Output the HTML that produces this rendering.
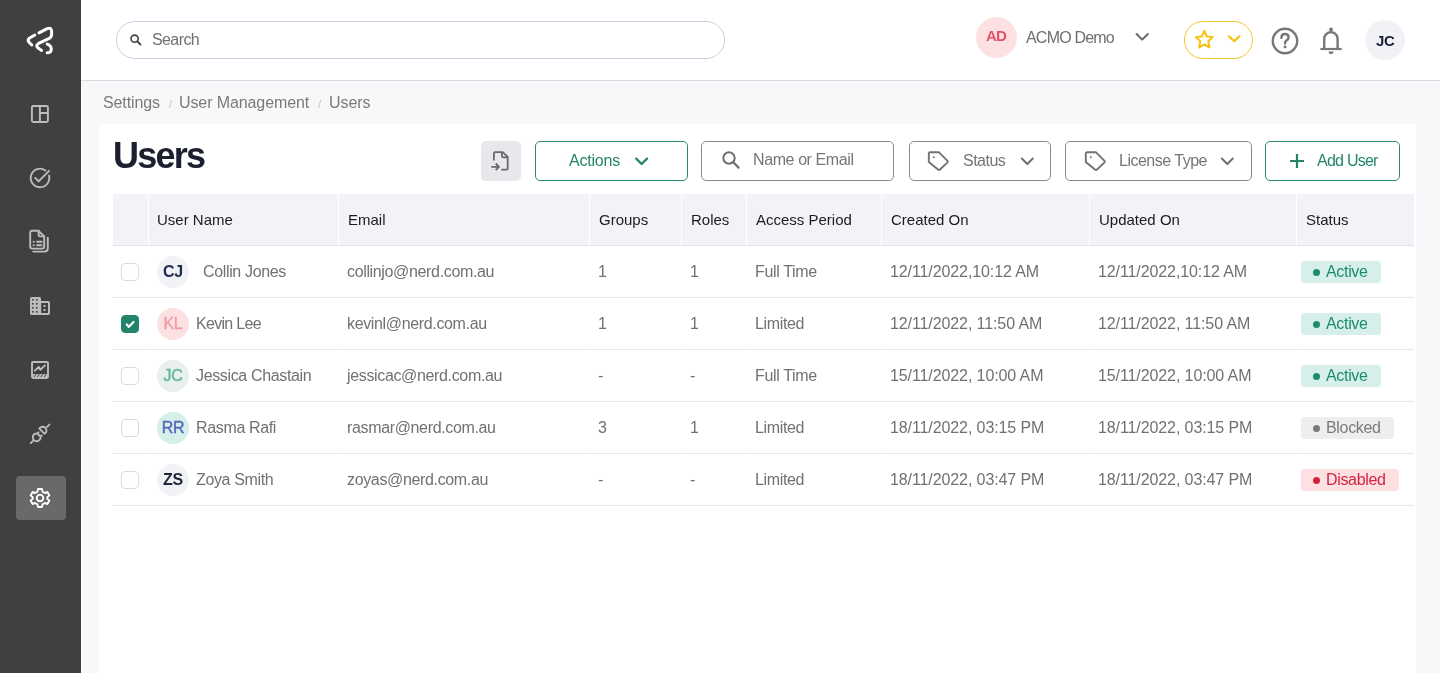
<!DOCTYPE html>
<html><head><meta charset="utf-8">
<style>
*{box-sizing:border-box;margin:0;padding:0}
html,body{width:1440px;height:673px;overflow:hidden}
.abs,table{will-change:transform}
body{background:#f7f8fa;font-family:"Liberation Sans",sans-serif;position:relative;color:#666}
.abs{position:absolute}
#side{left:0;top:0;width:81px;height:673px;background:#404040}
#hdr{left:81px;top:0;width:1359px;height:81px;background:#fff;border-bottom:1px solid #d9dadd}
#search{left:116px;top:21px;width:609px;height:38px;border:1px solid #c8cfe0;border-radius:19px;background:#fff}
.txt{white-space:nowrap;line-height:1}
#card{left:99px;top:124px;width:1317px;height:560px;background:#fff;border-radius:3px}
.btn{position:absolute;top:141px;height:40px;border-radius:5px;background:#fff}
.gbtn{border:1.3px solid #2a8a70;color:#24856b}
.gybtn{border:1px solid #8a8a8a;color:#757575}
table{position:absolute;left:113px;top:194px;border-collapse:separate;border-spacing:1px 0;margin-left:-1px}
th{background:#f2f3f7;height:52px;text-align:left;font-weight:normal;color:#1c1c1c;font-size:15px;padding:0 0 0 9px;border-bottom:1px solid #e3e4e8}
td{height:52px;font-size:16px;letter-spacing:-0.35px;color:#717171;padding:0 0 0 8px;border-bottom:1px solid #e6e7ea;white-space:nowrap}
td.dt{letter-spacing:-0.1px}
.cb{width:18px;height:18px;border:1px solid #dadbe0;border-radius:4px;display:inline-block;vertical-align:middle;margin-left:0}
.av{display:inline-block;width:32px;height:32px;border-radius:16px;text-align:center;line-height:32px;font-size:16px;letter-spacing:-0.3px;vertical-align:middle;margin-right:7px}
.nm{position:relative;top:1px}
.badge{display:inline-block;height:22px;line-height:22px;border-radius:4px;padding:0 13px 0 12px;font-size:16px;letter-spacing:-0.33px;position:relative}
td.st{padding-left:4px}
.badge i{display:inline-block;width:7px;height:7px;border-radius:4px;margin-right:6px;vertical-align:1px}
</style></head><body>
<div id="side" class="abs">
<svg class="abs" style="left:0;top:0" width="81" height="673" viewBox="0 0 81 673">
 <g fill="none" stroke="#fff" stroke-width="3" stroke-linecap="round" stroke-linejoin="round">
  <path d="M34.8,35 L29.3,38.2 Q27.2,40 29,42.2 L31.8,45"/>
  <path d="M39,32.8 L47.2,28.6 Q51.6,27 51.6,31.6 L51.6,34.6 Q51.6,37.2 49.2,38.3 L38.6,43.4 Q35.3,45.6 37.8,47.8 L41.6,50.4"/>
  <path d="M47.2,44 L49.6,45.4 Q51.2,46.4 51.2,48.4 L51.2,50 Q50.8,52.8 47.2,52.8"/>
 </g>
 <g fill="none" stroke="#bcbcbc" stroke-width="1.9" stroke-linecap="round" stroke-linejoin="round">
  <!-- layout -->
  <rect x="31.9" y="106" width="16" height="16" rx="1.5"/>
  <path d="M39.9,106 V122 M39.9,113 H47.9"/>
  <!-- check circle -->
  <path d="M45.4,170.4 A9.3,9.3 0 1 0 49,175.6"/>
  <path d="M35.2,177.9 L38.6,181.4 L49,170.9"/>
  <!-- docs -->
  <path d="M38.6,230.8 H32.2 Q30.2,230.8 30.2,232.8 V246.6 Q30.2,248.6 32.2,248.6 H42.2 Q44.2,248.6 44.2,246.6 V236.4 Z"/>
  <path d="M38.6,230.8 V234.4 Q38.6,236.4 40.6,236.4 H44.2"/>
  <path d="M33.2,251.6 H44.4 Q47.8,251.6 47.8,248.2 V237.6"/>
  <path d="M33.6,241.7 h0.2 M37,241.7 H41.6 M33.6,245.2 h0.2 M37,245.2 H41.6"/>
  <!-- chart -->
  <rect x="32" y="362" width="16" height="16" rx="1.2"/>
  <path d="M34.8,370.6 L38.8,367 L40.4,369.8 L45,365.4"/>
  <!-- plug -->
  <path d="M30.7,443.1 L33.5,440.3"/>
  <path d="M37.3,433.5 L40.5,436.7 A3.9,3.9 0 1 1 37.3,433.5 Z M37.3,433.5 L38.5,432.3 M40.5,436.7 L41.7,435.5" stroke-width="1.9"/>
  <path d="M39.4,428.6 L44.6,433.8 A3.8,3.8 0 1 0 39.4,428.6 Z" stroke-width="1.9"/>
  <path d="M47.1,426.9 L49.4,424.6"/>
 </g>
 <!-- building -->
 <g fill="#bcbcbc">
  <rect x="30" y="297" width="11" height="18" rx="1.5"/>
  <path d="M40,301 H48 Q50,301 50,303 V313 Q50,315 48,315 H40 Z M41.2,303 V313 H48 V303 Z" fill-rule="evenodd"/>
  <rect x="43.5" y="305" width="2" height="2"/><rect x="43.5" y="309" width="2" height="2"/>
 </g>
 <g fill="#404040">
  <rect x="32" y="299" width="1.6" height="1.6"/><rect x="36" y="299" width="1.6" height="1.6"/>
  <rect x="32" y="303" width="1.6" height="1.6"/><rect x="36" y="303" width="1.6" height="1.6"/>
  <rect x="32" y="307" width="1.6" height="1.6"/><rect x="36" y="307" width="1.6" height="1.6"/>
  <rect x="32" y="311" width="1.6" height="1.6"/><rect x="36" y="311" width="1.6" height="1.6"/>
 </g>
 <!-- chart hatch -->
 <g fill="#bcbcbc"><rect x="32" y="374" width="16" height="3"/></g>
 <g stroke="#404040" stroke-width="0.9"><path d="M34,377 L36,374 M37.4,377 L39.4,374 M40.8,377 L42.8,374 M44.2,377 L46.2,374"/></g>
 <!-- active settings -->
 <rect x="16" y="476" width="50" height="44" rx="4" fill="#696969"/>
 <g transform="translate(40,498)">
  <path fill="none" stroke="#fff" stroke-width="1.9" stroke-linejoin="round" d="M-2,-9 H2 L2.6,-6.3 L4.8,-5 L7.4,-6 L9.4,-2.6 L7.3,-0.8 V0.8 L9.4,2.6 L7.4,6 L4.8,5 L2.6,6.3 L2,9 H-2 L-2.6,6.3 L-4.8,5 L-7.4,6 L-9.4,2.6 L-7.3,0.8 V-0.8 L-9.4,-2.6 L-7.4,-6 L-4.8,-5 L-2.6,-6.3 Z"/>
  <circle r="3.3" fill="none" stroke="#fff" stroke-width="1.9"/>
 </g>
</svg>
</div>
<div id="hdr" class="abs"></div>
<div id="search" class="abs">
 <svg class="abs" style="left:12px;top:11px" width="14" height="14" viewBox="0 0 14 14"><circle cx="5.6" cy="5.7" r="3.6" fill="none" stroke="#404040" stroke-width="1.6"/><path d="M8.3,8.4 L11.4,11.5" stroke="#404040" stroke-width="1.8" stroke-linecap="round"/></svg>
 <div class="abs txt" style="left:35px;top:10px;font-size:16px;letter-spacing:-0.6px;color:#707070">Search</div>
</div>
<div class="abs" style="left:976px;top:17px;width:41px;height:41px;border-radius:21px;background:#fde1e2"></div>
<div class="abs txt" style="left:986px;top:28px;font-size:15px;font-weight:bold;letter-spacing:-0.8px;color:#e25369">AD</div>
<div class="abs txt" style="left:1026px;top:29.5px;font-size:16px;letter-spacing:-0.8px;color:#6e6e6e">ACMO Demo</div>
<svg class="abs" style="left:1134px;top:31px" width="16" height="12" viewBox="0 0 16 12"><path d="M2.6,3 L8.2,8.6 L13.8,3" fill="none" stroke="#666" stroke-width="2" stroke-linecap="round" stroke-linejoin="round"/></svg>
<div class="abs" style="left:1184px;top:21px;width:69px;height:38px;border-radius:19px;border:1.2px solid #f6c52a"></div>
<svg class="abs" style="left:1193px;top:28px" width="23" height="23" viewBox="0 0 23 23"><path d="M11.3,2.9 L13.8,8.6 L19.6,9.1 L15.3,13.2 L16.4,19.5 L11.3,16.3 L6.2,19.5 L7.3,13.2 L3.0,9.1 L8.8,8.6 Z" fill="none" stroke="#f8c010" stroke-width="2" stroke-linejoin="round"/></svg>
<svg class="abs" style="left:1226px;top:32px" width="16" height="12" viewBox="0 0 16 12"><path d="M3,4.3 L8.2,9.3 L13.4,4.3" fill="none" stroke="#f8c010" stroke-width="2.2" stroke-linecap="round" stroke-linejoin="round"/></svg>
<svg class="abs" style="left:1270px;top:26px" width="30" height="30" viewBox="0 0 30 30"><circle cx="15" cy="15" r="12.2" fill="none" stroke="#777" stroke-width="2.4"/><path d="M11.4,11.8 Q11.4,8 15,8 Q18.6,8 18.6,11.3 Q18.6,13.2 16.6,14.4 Q15,15.3 15,17.4" fill="none" stroke="#777" stroke-width="2.4" stroke-linecap="round"/><rect x="13.7" y="19.6" width="2.6" height="2.6" fill="#777"/></svg>
<svg class="abs" style="left:1315px;top:22px" width="32" height="36" viewBox="0 0 32 36"><circle cx="16" cy="7.4" r="1.9" fill="#777"/><path d="M9.2,26.5 V16.8 A6.7,6.7 0 0 1 22.6,16.8 V26.5" fill="none" stroke="#777" stroke-width="2.4"/><path d="M5.4,27 H26.7" stroke="#777" stroke-width="2.2"/><path d="M13.4,29.6 H18.7 Q18.3,32.2 16,32.2 Q13.7,32.2 13.4,29.6 Z" fill="#777"/></svg>
<div class="abs" style="left:1365px;top:20px;width:40px;height:40px;border-radius:20px;background:#f1f2f6"></div>
<div class="abs txt" style="left:1376px;top:33px;font-size:15px;font-weight:bold;letter-spacing:-0.4px;color:#1b2038">JC</div>
<div class="abs txt" style="left:103px;top:95px;font-size:16px;letter-spacing:-0.1px;color:#7a7a7a">Settings<span style="color:#c4c4c4;font-size:11px;margin:0 7px 0 9px">/</span>User Management<span style="color:#c4c4c4;font-size:11px;margin:0 8px 0 9px">/</span>Users</div>
<div id="card" class="abs"></div>
<div class="abs txt" style="left:113px;top:138px;font-size:36px;font-weight:bold;color:#1b1f2e;letter-spacing:-1.75px">Users</div>
<div class="btn" style="left:481px;width:40px;background:#e7e8eb;border-radius:5px">
 <svg class="abs" style="left:4px;top:4px" width="30" height="30" viewBox="0 0 30 30"><path d="M8.9,15.4 V8.4 Q8.9,7.1 10.2,7.1 H17.8 L22.7,12 V23.4 Q22.7,24.7 21.4,24.7 H16.3" fill="none" stroke="#6a6a6a" stroke-width="1.8" stroke-linejoin="round"/><path d="M16.9,7.5 V11 Q16.9,12.3 18.2,12.3 H22.5" fill="none" stroke="#6a6a6a" stroke-width="1.8" stroke-linejoin="round"/><path d="M6.2,21.8 H14 M10.7,18.5 L14,21.8 L10.7,25.1" fill="none" stroke="#6a6a6a" stroke-width="1.8" stroke-linejoin="round"/></svg>
</div>
<div class="btn gbtn" style="left:535px;width:153px">
 <div class="abs txt" style="left:33px;top:11px;font-size:16px;letter-spacing:-0.2px">Actions</div>
 <svg class="abs" style="left:98px;top:14px" width="16" height="12" viewBox="0 0 16 12"><path d="M2.2,2.6 L7.6,8 L13,2.6" fill="none" stroke="#24856b" stroke-width="2.3" stroke-linecap="round" stroke-linejoin="round"/></svg>
</div>
<div class="btn gybtn" style="left:701px;width:193px">
 <svg class="abs" style="left:19px;top:7.5px" width="20" height="20" viewBox="0 0 20 20"><circle cx="8" cy="8" r="5.7" fill="none" stroke="#6e6e6e" stroke-width="2"/><path d="M12.3,12.3 L17.6,17.6" stroke="#6e6e6e" stroke-width="2.2" stroke-linecap="round"/></svg>
 <div class="abs txt" style="left:51px;top:10px;font-size:16px;letter-spacing:-0.4px;color:#767676">Name or Email</div>
</div>
<div class="btn gybtn" style="left:909px;width:142px">
 <svg class="abs" style="left:15px;top:8px" width="24" height="24" viewBox="0 0 24 24"><path d="M3.8,3.6 Q3.8,2.2 5.2,2.2 H13.8 L22.3,10.7 Q23.2,11.7 22.3,12.6 L15,19.5 Q14,20.4 13,19.6 L3.8,11.9 Z" fill="none" stroke="#727272" stroke-width="1.9" stroke-linejoin="round"/><circle cx="8.8" cy="7.2" r="0.95" fill="#727272"/></svg>
 <div class="abs txt" style="left:53px;top:11px;font-size:16px;letter-spacing:-0.5px">Status</div>
 <svg class="abs" style="left:110px;top:14px" width="15" height="11" viewBox="0 0 15 11"><path d="M1.8,2.5 L7.3,8 L12.8,2.5" fill="none" stroke="#707070" stroke-width="2" stroke-linecap="round" stroke-linejoin="round"/></svg>
</div>
<div class="btn gybtn" style="left:1065px;width:187px">
 <svg class="abs" style="left:15.5px;top:8px" width="24" height="24" viewBox="0 0 24 24"><path d="M3.8,3.6 Q3.8,2.2 5.2,2.2 H13.8 L22.3,10.7 Q23.2,11.7 22.3,12.6 L15,19.5 Q14,20.4 13,19.6 L3.8,11.9 Z" fill="none" stroke="#727272" stroke-width="1.9" stroke-linejoin="round"/><circle cx="8.8" cy="7.2" r="0.95" fill="#727272"/></svg>
 <div class="abs txt" style="left:53px;top:11px;font-size:16px;letter-spacing:-0.5px">License Type</div>
 <svg class="abs" style="left:154px;top:14px" width="15" height="11" viewBox="0 0 15 11"><path d="M1.8,2.5 L7.3,8 L12.8,2.5" fill="none" stroke="#707070" stroke-width="2" stroke-linecap="round" stroke-linejoin="round"/></svg>
</div>
<div class="btn gbtn" style="left:1265px;width:135px">
 <svg class="abs" style="left:23px;top:11px" width="16" height="16" viewBox="0 0 16 16"><path d="M8,1 V15 M1,8 H15" stroke="#24856b" stroke-width="2.2"/></svg>
 <div class="abs txt" style="left:51px;top:11px;font-size:16px;letter-spacing:-0.75px">Add User</div>
</div>
<table>
<tr><th style="width:35px"></th><th style="width:189px;padding-left:8px">User Name</th><th style="width:250px">Email</th><th style="width:91px">Groups</th><th style="width:64px">Roles</th><th style="width:134px">Access Period</th><th style="width:207px">Created On</th><th style="width:206px">Updated On</th><th style="width:117px">Status</th></tr>
<tr><td><span class="cb"></span></td><td><span class="av" style="background:#f1f2f6;color:#1f2a4d;font-weight:bold;margin-right:14px">CJ</span><span class="nm">Collin Jones</span></td><td>collinjo@nerd.com.au</td><td>1</td><td>1</td><td>Full Time</td><td class="dt">12/11/2022,10:12 AM</td><td class="dt">12/11/2022,10:12 AM</td><td class="st"><span class="badge" style="background:#d6efeb;color:#1f8a6e"><i style="background:#1f8a6e"></i>Active</span></td></tr>
<tr><td><span class="cb" style="background:#23846c;border-color:#23846c;border-radius:4px;position:relative"><svg class="abs" style="left:2px;top:2px" width="13" height="13" viewBox="0 0 13 13"><path d="M2.7,6.3 L4.7,8.9 L9.5,3.9" fill="none" stroke="#fff" stroke-width="2.1" stroke-linecap="round" stroke-linejoin="round"/></svg></span></td><td><span class="av" style="background:#fde1e2;color:#f19aa5;-webkit-text-stroke:0.35px #f19aa5">KL</span><span class="nm" style="letter-spacing:-0.7px">Kevin Lee</span></td><td>kevinl@nerd.com.au</td><td>1</td><td>1</td><td>Limited</td><td class="dt">12/11/2022, 11:50 AM</td><td class="dt">12/11/2022, 11:50 AM</td><td class="st"><span class="badge" style="background:#d6efeb;color:#1f8a6e"><i style="background:#1f8a6e"></i>Active</span></td></tr>
<tr><td><span class="cb"></span></td><td><span class="av" style="background:#e9efed;color:#62bb98;-webkit-text-stroke:0.45px #62bb98">JC</span><span class="nm">Jessica Chastain</span></td><td>jessicac@nerd.com.au</td><td>-</td><td>-</td><td>Full Time</td><td class="dt">15/11/2022, 10:00 AM</td><td class="dt">15/11/2022, 10:00 AM</td><td class="st"><span class="badge" style="background:#d6efeb;color:#1f8a6e"><i style="background:#1f8a6e"></i>Active</span></td></tr>
<tr><td><span class="cb"></span></td><td><span class="av" style="background:#d6efeb;color:#5767b8;-webkit-text-stroke:0.45px #5767b8">RR</span><span class="nm">Rasma Rafi</span></td><td>rasmar@nerd.com.au</td><td>3</td><td>1</td><td>Limited</td><td class="dt">18/11/2022, 03:15 PM</td><td class="dt">18/11/2022, 03:15 PM</td><td class="st"><span class="badge" style="background:#eeeef0;color:#7a7a7a"><i style="background:#7a7a7a"></i>Blocked</span></td></tr>
<tr><td><span class="cb"></span></td><td><span class="av" style="background:#f1f2f6;color:#1f2437;font-weight:bold">ZS</span><span class="nm">Zoya Smith</span></td><td>zoyas@nerd.com.au</td><td>-</td><td>-</td><td>Limited</td><td class="dt">18/11/2022, 03:47 PM</td><td class="dt">18/11/2022, 03:47 PM</td><td class="st"><span class="badge" style="background:#fde1e2;color:#d0243f"><i style="background:#d0243f"></i>Disabled</span></td></tr>
</table>
</body></html>
